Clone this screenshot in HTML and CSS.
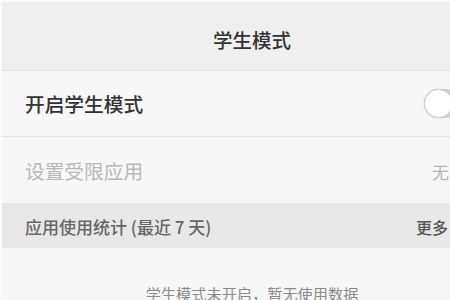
FILE: index.html
```html
<!DOCTYPE html>
<html lang="zh">
<head>
<meta charset="utf-8">
<title>学生模式</title>
<link rel="stylesheet" href="styles.css">
</head>
<body>
<div class="screen">
  <header class="topbar"><span class="title">学生模式</span></header>
  <div class="row">
    <span class="label">开启学生模式</span>
    <span class="switch"><span class="knob"></span></span>
  </div>
  <div class="row row-disabled">
    <span class="label">设置受限应用</span>
    <span class="value">无</span>
  </div>
  <div class="section">
    <span class="section-title">应用使用统计 (最近 7 天)</span>
    <span class="more">更多</span>
  </div>
  <div class="empty">学生模式未开启，暂无使用数据</div>
</div>
</body>
</html>
```
FILE: styles.css
```css
html, body {
  margin: 0;
  padding: 0;
}
body {
  width: 450px;
  height: 300px;
  overflow: hidden;
  background: #f7f7f7;
  font-family: "Noto Sans CJK SC", "Noto Sans", sans-serif;
}
.screen {
  display: flex;
  flex-direction: column;
  height: 300px;
  overflow: hidden;
  border-left: 2px solid #fbfbfb;
  border-top: 2px solid #fbfbfb;
  box-sizing: border-box;
}
.topbar {
  flex: none;
  height: 69px;
  background: #efefef;
  border-bottom: 1px solid #e2e2e2;
  display: flex;
  align-items: center;
  justify-content: center;
  padding-left: 52px;
  padding-top: 8px;
  box-sizing: border-box;
}
.title {
  font-size: 19.5px;
  font-weight: 500;
  line-height: 24px;
  color: #333;
}
.row {
  flex: none;
  height: 66px;
  display: flex;
  align-items: center;
  justify-content: space-between;
  padding-left: 23px;
  border-bottom: 1px solid #e6e6e6;
  box-sizing: border-box;
  overflow: hidden;
}
.row .label {
  font-size: 19.7px;
  font-weight: 500;
  line-height: 24px;
  color: #333;
}
.row-disabled {
  border-bottom: none;
  padding-top: 2px;
}
.row-disabled .label {
  font-weight: 400;
  color: #b8b8b8;
}
.value {
  font-size: 17px;
  color: #b5b5b5;
  margin-right: 1px;
}
.switch {
  position: relative;
  width: 26px;
  height: 29px;
  border-radius: 15px 0 0 15px;
  background: #d6d6d6;
  flex: none;
}
.knob {
  position: absolute;
  left: 0;
  top: 0;
  width: 27px;
  height: 27px;
  border-radius: 50%;
  background: #fff;
  border: 1px solid #cfcfcf;
  box-shadow: 0 0 2px rgba(0, 0, 0, 0.15);
}
.section {
  flex: none;
  height: 45px;
  background: #e8e8e8;
  display: flex;
  align-items: center;
  justify-content: space-between;
  padding-left: 23px;
  padding-top: 2px;
  box-sizing: border-box;
}
.section-title {
  font-size: 17px;
  font-weight: 500;
  color: #666;
}
.more {
  font-size: 16px;
  font-weight: 500;
  color: #555;
  margin-right: 2px;
}
.empty {
  flex: none;
  margin-top: 35px;
  padding-left: 52px;
  text-align: center;
  font-size: 15.2px;
  line-height: 20px;
  color: #8a8a8a;
}
```
